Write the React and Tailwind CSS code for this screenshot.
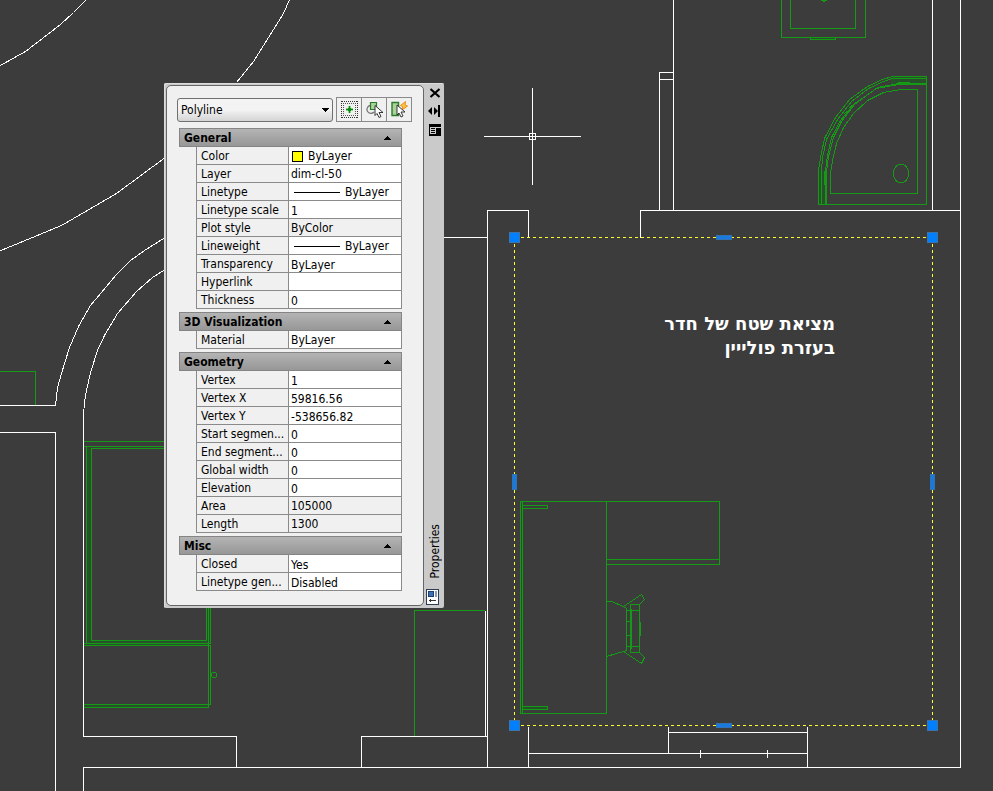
import React from 'react';

const sections = [
  {
    title: 'General',
    rows: [
      { label: 'Color', value: 'ByLayer', kind: 'color' },
      { label: 'Layer', value: 'dim-cl-50', kind: 'text' },
      { label: 'Linetype', value: 'ByLayer', kind: 'line' },
      { label: 'Linetype scale', value: '1', kind: 'number' },
      { label: 'Plot style', value: 'ByColor', kind: 'readonly' },
      { label: 'Lineweight', value: 'ByLayer', kind: 'line' },
      { label: 'Transparency', value: 'ByLayer', kind: 'number' },
      { label: 'Hyperlink', value: '', kind: 'text' },
      { label: 'Thickness', value: '0', kind: 'number' },
    ],
  },
  {
    title: '3D Visualization',
    rows: [{ label: 'Material', value: 'ByLayer', kind: 'text' }],
  },
  {
    title: 'Geometry',
    rows: [
      { label: 'Vertex', value: '1', kind: 'number' },
      { label: 'Vertex X', value: '59816.56', kind: 'number' },
      { label: 'Vertex Y', value: '-538656.82', kind: 'number' },
      { label: 'Start segmen...', value: '0', kind: 'number' },
      { label: 'End segment...', value: '0', kind: 'number' },
      { label: 'Global width', value: '0', kind: 'number' },
      { label: 'Elevation', value: '0', kind: 'number' },
      { label: 'Area', value: '105000', kind: 'readonly' },
      { label: 'Length', value: '1300', kind: 'readonly' },
    ],
  },
  {
    title: 'Misc',
    rows: [
      { label: 'Closed', value: 'Yes', kind: 'number' },
      { label: 'Linetype gen...', value: 'Disabled', kind: 'number' },
    ],
  },
];

const cornerGrips = [[509, 232], [927, 232], [509, 720], [927, 720]];

const Drawing = () => (
  <svg className="absolute inset-0 h-full w-full" shapeRendering="crispEdges" aria-hidden="true">
    <g transform="translate(0.5 0.5)" fill="none" strokeWidth="1">
      {/* dark fill between close green lines */}
      <g fill="#28502a" stroke="none">
        <path d="M86 447H91V640H86ZM86 640H207V645H86ZM83 704H208V707H83ZM206 608H210V643H206Z" />
        <path d="M520 501H522V713H520ZM522 706H547V709H522ZM818 170H826V204H818ZM890 76H926V84H890ZM810 37H835V39H810Z" />
      </g>

      {/* furniture */}
      <g stroke="#149a14">
        <path d="M-2 371H35V404" />
        <path d="M83 441H170M83 446H170M170 448H91V640H206V600M86 446V643M83 643H210V600M83 645H210M208 600V707H83M210 645V704H83" />
        <ellipse cx="213.5" cy="674.5" rx="2.500" ry="3" />
        <path d="M414 736V610H484" />
        <path d="M781 -2V37H865V-2M790 -2V28H855V-2M810 37V39H835V37M820 0H826M822 1H824" />
        <path d="M818 204V170L820 157L824 138L835 117L849 99L867 86L882 79L892 76H926V204Z" />
        <path d="M821 204V170L822 157L826 139L837 119L851 101L868 88L883 81L892 78H926" />
        <path d="M825 204V170L827 155L831 137L840 120L853 104L876 88L898 84H926" />
        <path d="M826 204V171L828 156L833 137L841 121L854 104L877 87L898 83H926" />
        <path d="M897 82H909M844 113L848 110M849 107L853 104M824 170V184" />
        <path d="M830 193V173L832 160L836 143L843 127L853 113L867 100L883 92L900 89H917V193Z" />
        <ellipse cx="900.5" cy="173" rx="7.500" ry="9.500" />
        <path d="M520 501H606V713H520ZM522 501V713M606 501H719V564H606M606 559H719" />
        <path d="M522 505H547V508H522M522 706H547V709H522" />
        <path d="M606 601H611L623 606L641 594L644 599L639 604M623 606L626 608V650L623 651M606 656L623 651L641 663L644 657L639 652" />
        <path d="M630 604H639V652H630ZM631 608V648M626 610H639M626 621H631M626 635H631M626 646H639M640 621V635" />
      </g>

      {/* walls */}
      <g stroke="#ffffff">
        <path d="M86 -1L73 12L60 24L25 51L-2 66" />
        <path d="M289 -1L283 13L253 61L236 82" />
        <path d="M170 154L162 159L116 193L61 225L-2 251" />
        <path d="M170 234L163 238L144 250L130 260L116 274L90 305L78 326L69 347L61 373L57 387L55 405H-2" />
        <path d="M170 266L163 270L152 277L136 291L117 313L104 335L97 350L90 372L86 390L84 401V407" />
        <path d="M-2 432H55V800" />
        <path d="M83 408V736H236V767M83 800V767H960V-2" />
        <path d="M440 237H487M487 767V210H528V237M640 237V210H960M932 -2V210" />
        <path d="M673 -2V210M673 72H659V210M659 79H673" />
        <path d="M361 767V736H487M485 610V736" />
        <path d="M528 726V767M528 753H807M668 726V753M668 732H807M807 726V767M700 749V757M767 749V757" />
        <path d="M532 87V184M483 136H580M529 133H535V139H529Z" />
      </g>

      {/* selected room outline */}
      <path d="M514 237H932M514 237V725M932 237V725M514 725H932" stroke="#ffff28" strokeDasharray="3 3" />
      <g fill="#1a79dc" stroke="#3273b4">
        <rect x="716" y="235" width="15" height="4" />
        <rect x="716" y="723" width="15" height="4" />
        <rect x="512" y="474" width="4" height="15" />
        <rect x="930" y="474" width="4" height="15" />
      </g>
      {cornerGrips.map(([x, y]) => (
        <rect key={`${x}-${y}`} x={x} y={y} width="10" height="10" fill="#0080ff" stroke="#3f72a6" />
      ))}
    </g>
  </svg>
);

const cursorPath = 'M0 0V10L2 8L4 12L6 11L4 7H8Z';

const PickAddIcon = () => (
  <svg width="17" height="17" viewBox="0 0 17 17" shapeRendering="crispEdges" fill="none">
    <path d="M1 .5H17M1 16.5H17M.5 0V17M16.5 0V17" stroke="#333" strokeDasharray="1 1" />
    <path d="M2 2.5H15M2 14.5H15M2.5 2V15M14.5 2V15" stroke="#555" strokeDasharray="1 1" />
    <path d="M7 5H10V7H12V10H10V12H7V10H5V7H7Z" fill="#8fd08f" />
    <path d="M8 5H9V12H8ZM5 8H12V9H5Z" fill="#0a8a0a" />
    <path d="M7 7H10V10H7Z" fill="#0a8a0a" />
  </svg>
);

const SelectObjectsIcon = () => (
  <svg width="17" height="17" viewBox="1 0 17 17" fill="none">
    <path d="M5 4.500A4 4 0 1 0 9 11" stroke="#777" strokeWidth="1.3" />
    <path d="M5.500 1.500H11.500V8.500H5.500Z" fill="#a9d398" stroke="#2c7a2c" strokeWidth="1.2" />
    <path d={cursorPath} transform="translate(10 4.500)" fill="#fff" stroke="#222" strokeWidth=".9" />
  </svg>
);

const QuickSelectIcon = () => (
  <svg width="17" height="17" viewBox="0 0 17 17" fill="none">
    <path d="M1 1.500H7.500V14.500H1Z" fill="#a9d398" stroke="#2c7a2c" strokeWidth="1.4" />
    <path d="M14.500 .5L9.500 4.500L12 6L10.500 9.500L16.500 5L14 4Z" fill="#ffc53a" stroke="#e8840c" strokeWidth=".9" />
    <path d={cursorPath} transform="translate(6 4)" fill="#fff" stroke="#222" strokeWidth=".9" />
  </svg>
);

const tools = [
  { name: 'Toggle value of PICKADD', Icon: PickAddIcon },
  { name: 'Select objects', Icon: SelectObjectsIcon },
  { name: 'Quick select', Icon: QuickSelectIcon },
];

const PropertyValue = ({ row, labelId }) => {
  switch (row.kind) {
    case 'color':
      return (
        <button aria-labelledby={labelId} className="flex h-[17px] w-full items-center gap-[5px] pt-px pl-[3px]">
          <span className="h-[11px] w-[11px] border border-black bg-[#ffff00]" />
          {row.value}
        </button>
      );
    case 'line':
      return (
        <button aria-labelledby={labelId} className="flex h-[17px] w-full items-center gap-[5px] pt-px pl-[5px]">
          <span className="h-px w-[46px] bg-black" />
          {row.value}
        </button>
      );
    case 'number':
      return (
        <input
          aria-labelledby={labelId}
          defaultValue={row.value}
          className="block h-[17px] w-full bg-transparent pt-[3px] pl-[2px] outline-none"
        />
      );
    case 'text':
      return (
        <input
          aria-labelledby={labelId}
          defaultValue={row.value}
          className="block h-[17px] w-full bg-transparent pt-px pl-[2px] outline-none"
        />
      );
    default:
      return <span className="block h-[17px] pt-px pl-[2px]">{row.value}</span>;
  }
};

const Section = ({ section }) => (
  <section>
    <h2>
      <button className="flex h-[19px] w-full items-center justify-between border border-[#858585] bg-linear-to-b from-[#b4b4b4] to-[#979797] pt-px pr-[10px] pl-1 font-bold">
        {section.title}
        <svg width="7" height="4" viewBox="0 0 7 4" shapeRendering="crispEdges">
          <path d="M3 0H4V1H5V2H6V3H7V4H0V3H1V2H2V1H3Z" />
        </svg>
      </button>
    </h2>
    <div className="pl-[17px]">
      <table className="w-full table-fixed border-separate border-spacing-0">
        <tbody>
          {section.rows.map((row) => {
            const labelId = `prop-${row.label.replace(/\W+/g, '-')}`;
            return (
              <tr key={row.label} className="h-[18px]">
                <th
                  id={labelId}
                  scope="row"
                  className="w-[92px] border-b border-l border-[#8a8a8a] p-0 pt-px pl-1 text-left font-normal whitespace-nowrap"
                >
                  {row.label}
                </th>
                <td
                  className={
                    row.kind === 'readonly'
                      ? 'border-x border-b border-[#8a8a8a] p-0'
                      : 'border-x border-b border-[#8a8a8a] bg-white p-0'
                  }
                >
                  <PropertyValue row={row} labelId={labelId} />
                </td>
              </tr>
            );
          })}
        </tbody>
      </table>
    </div>
  </section>
);

const TitleStrip = () => (
  <div className="flex w-5 flex-col items-center justify-between pt-[3px] pb-px pl-[2px]">
    <div className="flex flex-col items-center gap-[7px]">
      <button aria-label="Close">
        <svg className="block" width="12" height="10" viewBox="0 0 12 10" fill="none" stroke="#000" strokeWidth="2.2">
          <path d="M1.500 1L10.500 9M10.500 1L1.500 9" />
        </svg>
      </button>
      <button aria-label="Auto-hide">
        <svg className="block" width="14" height="12" viewBox="0 0 14 12">
          <path d="M4 2V10L0 6ZM6 2L10 6L6 10ZM10 0H12V12H10Z" />
        </svg>
      </button>
      <button aria-label="Panel menu">
        <svg className="block" width="12" height="12" viewBox="0 0 12 12" shapeRendering="crispEdges">
          <path d="M0 0H12V12H0Z" />
          <path d="M1 3H7V10H1Z" fill="#ccc" />
          <path d="M2 4H6V5H2ZM2 6H6V7H2ZM2 8H6V9H2Z" />
          <path d="M7 3H12V4H7Z" fill="#ccc" />
        </svg>
      </button>
    </div>
    <div className="flex flex-col items-center gap-[10px]">
      <h1 className="rotate-180 leading-4 [writing-mode:vertical-rl]">Properties</h1>
      <svg className="mr-[5px]" width="13" height="16" viewBox="0 0 13 16" shapeRendering="crispEdges" fill="none">
        <path d="M.5 .5H12.500V15.500H.5Z" fill="#fff" stroke="#2c3e55" />
        <path d="M2.500 2.500H7.500V7.500H2.500Z" fill="#3f6fae" stroke="#1d3f73" />
        <path d="M9 2H11V8H9Z" fill="#8a9cb5" />
        <path d="M3 11.500H10M4.500 10V13" stroke="#333" />
      </svg>
    </div>
  </div>
);

const PropertiesPanel = () => (
  <aside className="absolute top-[83px] left-[164px] flex w-[280px] rounded-[2px] bg-[#cacaca] py-[2px] pl-[2px] shadow-[inset_1px_1px_0_#dcdcdc]">
    <div className="flex-1 rounded-[5px] border border-[#666] bg-[#f0f0f0] pt-[11px] pr-[11px] pb-[14px] pl-[10px]">
      <div className="flex items-end gap-[3px]">
        <div className="relative flex-1">
          <select
            aria-label="Object type"
            className="block h-6 w-full appearance-none rounded-[3px] border border-[#707070] bg-linear-to-b from-[#f3f3f3] from-50% to-[#d4d4d4] pl-[3px] outline-none"
          >
            <option>Polyline</option>
          </select>
          <svg className="pointer-events-none absolute top-[10px] right-1" width="7" height="4" viewBox="0 0 7 4" shapeRendering="crispEdges">
            <path d="M0 0H7V1H6V2H5V3H4V4H3V3H2V2H1V1H0Z" />
          </svg>
        </div>
        <div className="flex border-l border-[#8a8a8a]">
          {tools.map(({ name, Icon }) => (
            <button
              key={name}
              aria-label={name}
              className="flex h-[25px] w-[25px] items-center justify-center border-y border-r border-[#8a8a8a]"
            >
              <Icon />
            </button>
          ))}
        </div>
      </div>
      <div className="mt-[6px] mr-[10px] ml-[2px] flex flex-col gap-[3px]">
        {sections.map((section) => (
          <Section key={section.title} section={section} />
        ))}
      </div>
    </div>
    <TitleStrip />
  </aside>
);

const App = () => {
  return (
    <main className="relative min-h-screen overflow-hidden bg-[#3c3c3c] font-['DejaVu_Sans_Condensed','Noto_Sans',sans-serif] text-[12px] leading-4 text-black">
      <Drawing />
      <p
        dir="rtl"
        lang="he"
        className="absolute top-[312px] left-[635px] w-[200px] font-['DejaVu_Sans',sans-serif] text-[18px] leading-6 font-bold text-white"
      >
        מציאת שטח של חדר
        <br />
        בעזרת פולייין
      </p>
      <PropertiesPanel />
    </main>
  );
};

export default App;
